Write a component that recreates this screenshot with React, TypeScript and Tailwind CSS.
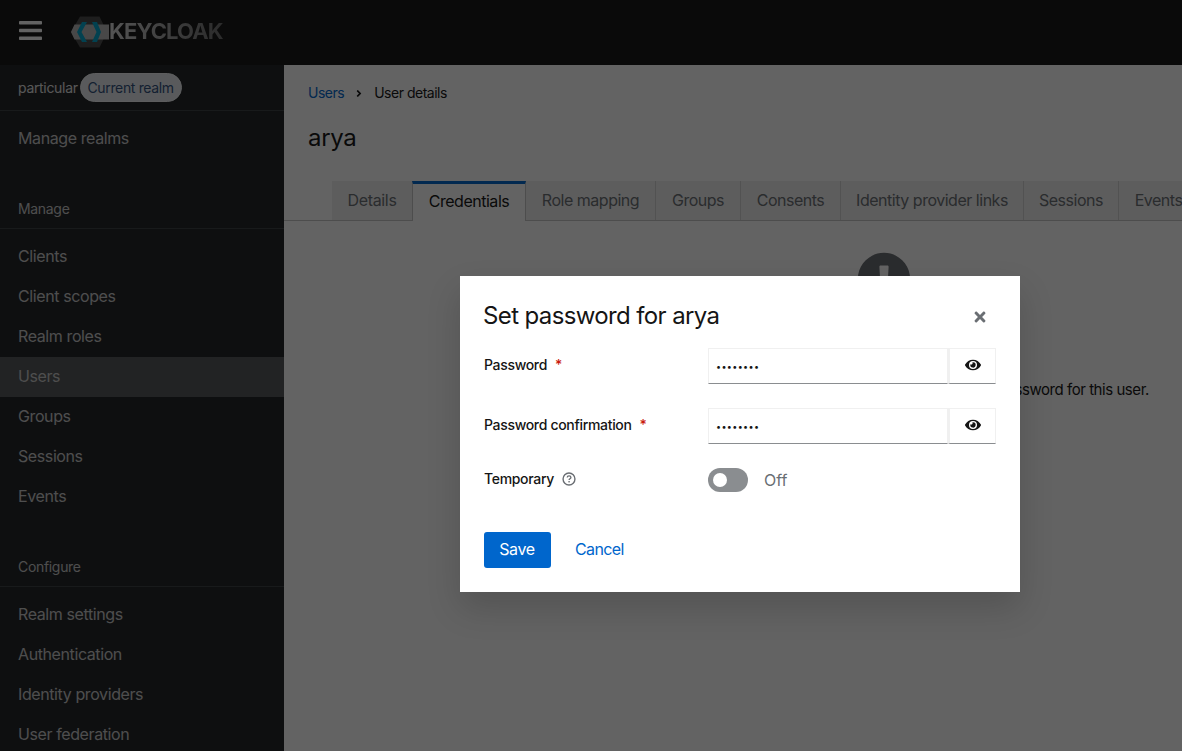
import React from "react";

function Item({ label, active }: { label: string; active?: boolean }) {
  return (
    <div className={`h-10 flex items-center px-[18px] pb-[2px] text-base tracking-[-0.025em] text-[#c7c7c7] ${active ? "bg-[#54575a]" : ""}`}>
      {label}
    </div>
  );
}

function Group({ title }: { title: string }) {
  return (
    <div className="h-[39px] mt-[31px] mb-2 flex items-center px-[18px] text-sm text-[#c7c7c7] border-b border-[#3c3f42]">
      {title}
    </div>
  );
}

function Eye() {
  return (
    <svg viewBox="0 0 576 512" className="w-4 h-4 -mt-[2px] fill-[#151515]">
      <path d="M572.52 241.4C518.29 135.59 410.93 64 288 64S57.68 135.64 3.48 241.41a32.35 32.35 0 0 0 0 29.19C57.71 376.41 165.07 448 288 448s230.32-71.64 284.52-177.41a32.35 32.35 0 0 0 0-29.19zM288 400a144 144 0 1 1 144-144 143.93 143.93 0 0 1-144 144zm0-240a95.31 95.31 0 0 0-25.31 3.79 47.85 47.85 0 0 1-66.9 66.9A95.78 95.78 0 1 0 288 160z" />
    </svg>
  );
}

function PasswordRow({ label, className }: { label: string; className?: string }) {
  return (
    <div className={`flex h-9 ${className ?? ""}`}>
      <div className="w-[224px] flex items-center text-sm font-medium text-[#151515] -mt-[2px]">
        <span>{label}</span>
        <span className="ml-2 text-[#c9190b]">*</span>
      </div>
      <div className="w-[288px] flex">
        <div className="w-[240px] h-9 border border-[#f0f0f0] border-b-[#8a8d90] flex items-center pl-[7px] text-[#151515]">
          <span className="text-[9px] tracking-[0.35px] leading-none">••••••••</span>
        </div>
        <div className="w-[48px] h-9 border border-l-2 border-[#f0f0f0] border-b-[#8a8d90] flex items-center justify-center">
          <Eye />
        </div>
      </div>
    </div>
  );
}

const tabs: [string, string][] = [
  ["Role mapping", "w-[130px]"],
  ["Groups", "w-[85px]"],
  ["Consents", "w-[100px]"],
  ["Identity provider links", "w-[183px]"],
  ["Sessions", "w-[95px]"],
  ["Events", "w-[80px]"],
];

export default function App() {
  return (
    <div className="relative h-[751px] w-[1182px] overflow-hidden bg-white font-['Inter',sans-serif] tracking-[-0.02em]">
      <header className="h-[65px] bg-[#151515] flex items-center">
        <svg viewBox="0 0 23 19" className="ml-[19px] w-[23px] h-[19px] -mt-[5px] fill-white">
          <rect x="0" y="0" width="23" height="3.6" rx="0.8" />
          <rect x="0" y="7.7" width="23" height="3.6" rx="0.8" />
          <rect x="0" y="15.4" width="23" height="3.6" rx="0.8" />
        </svg>
        <div className="ml-[29px] flex items-center -mt-[3px]">
          <svg viewBox="0 0 38 32" className="w-[38px] h-8 mt-[2px]">
            <path d="M9 .5h19.5L36 16l-7.5 15.5H9L0 16z" fill="#4a4a4a" />
            <path d="M3.5 8.5H38v15H3.5L0 16z" fill="#b8b8b8" />
            <path d="M11 6h5l-5.5 10L16 26h-5L6 16z" fill="#00a6cc" />
            <path d="M21 6h5l4 10-4 10h-5l4.5-10z" fill="#00a6cc" />
          </svg>
          <span className="text-[22px] font-bold leading-none tracking-[-0.04em] bg-gradient-to-r from-[#d8d8d8] to-[#6d6d6d] bg-clip-text text-transparent">KEYCLOAK</span>
        </div>
      </header>
      <div className="flex h-[686px]">
        <aside className="w-[284px] shrink-0 bg-[#212427]">
          <div className="h-[46px] border-b border-[#3c3f42] flex items-center px-[18px] text-sm text-[#e0e0e0]">
            particular
            <span className="ml-[2px] h-[29px] w-[102px] justify-center rounded-full bg-[#e4e8ec] border border-[#eef0f2] text-[#30507c] flex items-center tracking-[-0.025em]">Current realm</span>
          </div>
          <div className="mt-2"><Item label="Manage realms" /></div>
          <Group title="Manage" />
          <Item label="Clients" />
          <Item label="Client scopes" />
          <Item label="Realm roles" />
          <Item label="Users" active />
          <Item label="Groups" />
          <Item label="Sessions" />
          <Item label="Events" />
          <Group title="Configure" />
          <Item label="Realm settings" />
          <Item label="Authentication" />
          <Item label="Identity providers" />
          <Item label="User federation" />
        </aside>
        <main className="flex-1 min-w-0 bg-white overflow-hidden">
          <div className="w-[1200px]">
            <div className="pl-6 pt-[18px] flex items-center text-sm h-[38px] text-[#151515] tracking-[-0.035em]">
              <span className="text-[#06c]">Users</span>
              <svg viewBox="0 0 256 512" className="w-2 h-[11px] mx-[11px] fill-[#151515]">
                <path d="M224.3 273l-136 136c-9.4 9.4-24.6 9.4-33.9 0l-22.6-22.6c-9.4-9.4-9.4-24.6 0-33.9l96.4-96.4-96.4-96.4c-9.4-9.4-9.4-24.6 0-33.9L54.3 103c9.4-9.4 24.6-9.4 33.9 0l136 136c9.5 9.4 9.5 24.6.1 34z" />
              </svg>
              <span>User details</span>
            </div>
            <h1 className="pl-6 mt-[19px] text-2xl leading-8 font-normal text-[#151515]">arya</h1>
            <div className="mt-[27px] h-10 border-b border-[#c4c4c4] flex pl-12 whitespace-nowrap">
              <div className="h-[39px] w-[80px] pb-[1px] bg-[#f0f0f0] flex items-center justify-center text-[#6a6e73]">Details</div>
              <div className="h-10 w-[114px] pb-[3px] bg-white border-t-[3px] border-t-[#06c] border-x border-x-[#c4c4c4] flex items-center justify-center text-[#151515] tracking-[-0.03em]">Credentials</div>
              {tabs.map(([t, w]) => (
                <div key={t} className={`h-[39px] ${w} pb-[1px] bg-[#f0f0f0] border-r border-[#d2d2d2] flex items-center justify-center text-[#6a6e73] tracking-[-0.03em]`}>{t}</div>
              ))}
            </div>
            <div className="mt-8 flex flex-col items-center text-[#151515]">
              <svg viewBox="0 0 512 512" className="w-[54px] h-[54px] -mt-[1px] fill-[#6a6e73]">
                <path d="M504 256c0 136.997-111.043 248-248 248S8 392.997 8 256C8 119.083 119.043 8 256 8s248 111.083 248 248zm-248 50c-25.405 0-46 20.595-46 46s20.595 46 46 46 46-20.595 46-46-20.595-46-46-46zm-43.673-165.346l7.418 136c.347 6.364 5.609 11.346 11.982 11.346h48.546c6.373 0 11.635-4.982 11.982-11.346l7.418-136c.375-6.874-5.098-12.654-11.982-12.654h-63.383c-6.884 0-12.356 5.78-11.981 12.654z" />
              </svg>
              <div className="mt-[16px] text-xl leading-8">No credentials</div>
              <p className="mt-6 text-[15px] leading-6 whitespace-nowrap tracking-[-0.03em]">This user does not have any credentials. You can set the password for this user.</p>
            </div>
          </div>
        </main>
      </div>

      <div className="absolute inset-0 bg-[rgba(3,3,3,0.62)]" />

      <div className="absolute left-[460px] top-[276px] w-[560px] h-[316px] bg-white shadow-[0_16px_32px_rgba(3,3,3,0.16)] px-6 pt-6">
        <div className="flex items-center justify-between h-8">
          <h2 className="text-2xl text-[#151515] leading-8 -ml-[1px] tracking-[-0.026em]">Set password for arya</h2>
          <svg viewBox="0 0 352 512" className="w-3 h-4 mt-[2px] mr-[10px] fill-[#6a6e73]">
            <path d="M242.72 256l100.07-100.07c12.28-12.28 12.28-32.19 0-44.48l-22.24-22.24c-12.28-12.28-32.19-12.28-44.48 0L176 189.28 75.93 89.21c-12.28-12.28-32.19-12.28-44.48 0L9.21 111.45c-12.28 12.28-12.28 32.19 0 44.48L109.28 256 9.21 356.07c-12.28 12.28-12.28 32.19 0 44.48l22.24 22.24c12.28 12.28 32.2 12.28 44.48 0L176 322.72l100.07 100.07c12.28 12.28 32.2 12.28 44.48 0l22.24-22.24c12.28-12.28 12.28-32.19 0-44.48L242.72 256z" />
          </svg>
        </div>
        <PasswordRow label="Password" className="mt-4" />
        <PasswordRow label="Password confirmation" className="mt-6" />
        <div className="flex mt-6 h-6 items-center">
          <div className="w-[224px] flex items-center text-sm font-medium text-[#151515] -mt-[3px]">
            Temporary
            <svg viewBox="0 0 16 16" className="ml-2 w-[14px] h-[14px]" fill="none">
              <circle cx="8" cy="8" r="6.8" stroke="#6a6e73" strokeWidth="1.6" />
              <path d="M5.9 6.3c.1-1.2 1-1.9 2.2-1.9 1.2 0 2.1.8 2.1 1.8 0 1.5-2.1 1.5-2.1 2.9" stroke="#6a6e73" strokeWidth="1.5" />
              <rect x="7.3" y="10.3" width="1.6" height="1.6" fill="#6a6e73" />
            </svg>
          </div>
          <div className="w-10 h-6 rounded-full bg-[#8a8d90] relative">
            <div className="absolute left-[5px] top-[5px] w-[14px] h-[14px] rounded-full bg-white" />
          </div>
          <span className="ml-4 pb-[1px] text-[#6a6e73] tracking-normal">Off</span>
        </div>
        <div className="flex mt-10 items-center">
          <button className="h-9 w-[67px] pb-[2px] pr-[1px] rounded-[3px] bg-[#06c] text-white text-base">Save</button>
          <button className="ml-6 pb-[2px] text-[#06c] text-base tracking-[-0.04em]">Cancel</button>
        </div>
      </div>
    </div>
  );
}
